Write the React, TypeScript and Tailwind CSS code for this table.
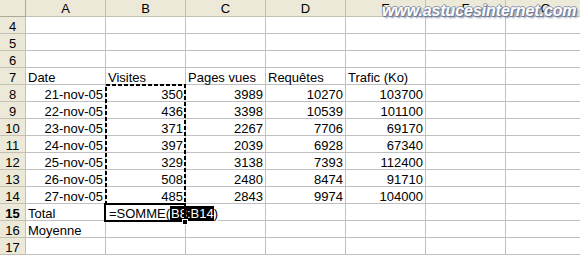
import React from "react";

type Cell = { v: string; right?: boolean };

const COLS = ["A", "B", "C", "D", "E", "F", "G"];
const ROWS = [4, 5, 6, 7, 8, 9, 10, 11, 12, 13, 14, 15, 16, 17];

const stats: [string, number, number, number, number][] = [
  ["21-nov-05", 350, 3989, 10270, 103700],
  ["22-nov-05", 436, 3398, 10539, 101100],
  ["23-nov-05", 371, 2267, 7706, 69170],
  ["24-nov-05", 397, 2039, 6928, 67340],
  ["25-nov-05", 329, 3138, 7393, 112400],
  ["26-nov-05", 508, 2480, 8474, 91710],
  ["27-nov-05", 485, 2843, 9974, 104000],
];

function cellAt(row: number, col: number): Cell | null {
  if (row === 7) {
    const heads = ["Date", "Visites", "Pages vues", "Requêtes", "Trafic (Ko)"];
    return heads[col] ? { v: heads[col] } : null;
  }
  if (row >= 8 && row <= 14) {
    const r = stats[row - 8];
    if (col < r.length) return { v: String(r[col]), right: true };
    return null;
  }
  if (row === 15 && col === 0) return { v: "Total" };
  if (row === 16 && col === 0) return { v: "Moyenne" };
  return null;
}

function Formula() {
  return (
    <span className="relative z-10 whitespace-nowrap bg-white pl-[1px]">
      =SOMME(
      <span className="bg-black pl-[1px] text-white">B8:B14</span>)
    </span>
  );
}

export default function App() {
  return (
    <div
      className="relative h-[255px] w-[580px] overflow-hidden bg-white text-[13px] text-black"
      style={{ fontFamily: '"Liberation Sans", Arial, sans-serif' }}
    >
      <div className="grid grid-cols-[26px_repeat(7,80px)] auto-rows-[17px]">
        {/* corner + column headers */}
        <div className="border-b border-r border-[#aca899] bg-[#ece9d8]" />
        {COLS.map((c) => (
          <div
            key={c}
            className="border-b border-r border-[#c4c1b0] bg-[#ece9d8] text-center leading-[18px]"
          >
            {c}
          </div>
        ))}

        {ROWS.map((row) => (
          <React.Fragment key={row}>
            <div
              className={`border-b border-r border-[#c4c1b0] bg-[#ece9d8] text-center leading-[19px] ${
                row === 15 ? "font-bold" : ""
              }`}
            >
              {row}
            </div>
            {COLS.map((c, ci) => {
              const cell = cellAt(row, ci);
              const isEdit = row === 15 && ci === 1;
              return (
                <div
                  key={c}
                  className={`overflow-visible whitespace-nowrap border-b border-r border-[#c0c0c0] px-[2px] leading-[19px] ${
                    cell?.right ? "text-right" : "text-left"
                  }`}
                >
                  {isEdit ? <Formula /> : cell?.v}
                </div>
              );
            })}
          </React.Fragment>
        ))}
      </div>

      {/* copy marquee around B8:B14 */}
      <svg
        className="absolute left-[104px] top-[83px]"
        width="83"
        height="123"
        viewBox="0 0 83 123"
      >
        <rect
          x="2"
          y="2"
          width="79"
          height="119"
          fill="none"
          stroke="#000"
          strokeWidth="2"
          strokeDasharray="4 2"
        />
      </svg>

      {/* active cell frame on B15 */}
      <div className="pointer-events-none absolute left-[104px] top-[203px] z-20 h-[19px] w-[82px] border-2 border-black" />
      <div className="absolute left-[182px] top-[219px] z-30 h-[6px] w-[6px] border border-white bg-black" />

      {/* site watermark */}
      <div
        className="absolute left-[382px] top-[1px] z-40 whitespace-nowrap text-[16px] font-bold italic leading-[20px] text-white"
        style={{
          fontFamily: '"Liberation Sans", Arial, sans-serif',
          letterSpacing: "-0.1px",
          textShadow:
            "1px 1px 0 #6f7d99, -1px 0 0 #8e9ab3, 0 -1px 0 #8e9ab3, 1px 0 0 #6f7d99, 0 1px 0 #6f7d99, 2px 2px 2px #8f98ab",
        }}
      >
        www.astucesinternet.com
      </div>
    </div>
  );
}
